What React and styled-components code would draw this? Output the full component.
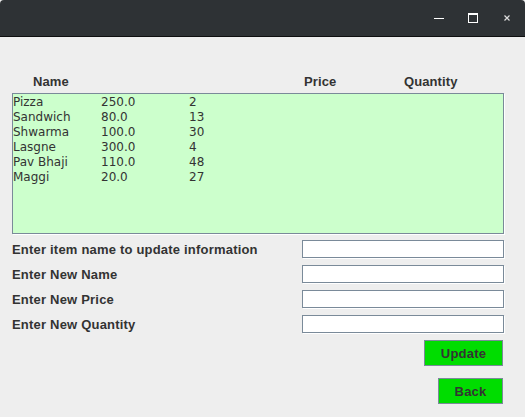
import React from "react";
import styled, { createGlobalStyle } from "styled-components";

const GlobalStyle = createGlobalStyle`
  html, body {
    margin: 0;
    padding: 0;
    background: #eeeeee;
  }
`;

const Window = styled.div`
  width: 525px;
  height: 417px;
  display: flex;
  flex-direction: column;
  background: #eeeeee;
  overflow: hidden;
`;

const TitleBar = styled.div`
  height: 36px;
  background: #2e3235;
  border-bottom: 1px solid #0e0f10;
  border-radius: 4px 4px 0 0;
  display: flex;
  align-items: center;
  justify-content: flex-end;
  padding-right: 1px;
`;

const WinButton = styled.div`
  width: 34px;
  height: 36px;
  display: flex;
  align-items: center;
  justify-content: center;
`;

const Content = styled.div`
  padding: 36px 21px 0 12px;
  display: flex;
  flex-direction: column;
`;

const HeaderRow = styled.div`
  display: grid;
  grid-template-columns: 271px 100px 1fr;
  height: 17px;
  align-items: center;
  padding-left: 21px;
  font-family: "Liberation Sans", Arial, sans-serif;
  font-weight: bold;
  font-size: 13px;
  color: #333333;
  letter-spacing: 0.1px;
`;

const TableBox = styled.div`
  margin-top: 3px;
  height: 138px;
  background: #ccffcc;
  border: 1px solid #7a8a99;
  box-shadow: 1px 1px 0 #ffffff;
  padding-top: 1px;
`;

const DataRow = styled.div`
  display: grid;
  grid-template-columns: 88px 88px 1fr;
  height: 15px;
  line-height: 15px;
  font-family: "DejaVu Sans", sans-serif;
  font-size: 12px;
  color: #333333;
`;

const Form = styled.div`
  margin-top: 6px;
  display: flex;
  flex-direction: column;
  gap: 7px;
`;

const FormRow = styled.div`
  display: flex;
  align-items: center;
  justify-content: space-between;
  height: 18px;
`;

const Label = styled.span`
  font-family: "Liberation Sans", Arial, sans-serif;
  font-weight: bold;
  font-size: 13px;
  letter-spacing: 0.2px;
  color: #333333;
`;

const Field = styled.input`
  box-sizing: border-box;
  width: 202px;
  height: 18px;
  margin: 0;
  padding: 0 4px;
  background: #ffffff;
  border: 1px solid #7a8a99;
  box-shadow: 1px 1px 0 #ffffff;
  outline: none;
`;

const ButtonRow = styled.div`
  display: flex;
  justify-content: flex-end;
  padding-right: 1px;
  margin-top: ${(p) => p.$top}px;
`;

const GreenButton = styled.button`
  box-sizing: border-box;
  width: ${(p) => p.$w}px;
  height: 26px;
  margin: 0;
  padding: 0;
  background: #00dd00;
  border: 1px solid #7a8a99;
  font-family: "Liberation Sans", Arial, sans-serif;
  font-weight: bold;
  font-size: 13px;
  letter-spacing: 0.2px;
  color: #333333;
  cursor: pointer;
`;

const items = [
  ["Pizza", "250.0", "2"],
  ["Sandwich", "80.0", "13"],
  ["Shwarma", "100.0", "30"],
  ["Lasgne", "300.0", "4"],
  ["Pav Bhaji", "110.0", "48"],
  ["Maggi", "20.0", "27"],
];

const labels = [
  "Enter item name to update information",
  "Enter New Name",
  "Enter New Price",
  "Enter New Quantity",
];

export default function App() {
  return (
    <Window>
      <GlobalStyle />
      <TitleBar>
        <WinButton>
          <svg width="12" height="12" viewBox="0 0 12 12">
            <rect x="1" y="6" width="10" height="1" fill="#ffffff" />
          </svg>
        </WinButton>
        <WinButton>
          <svg width="12" height="12" viewBox="0 0 12 12">
            <rect x="1.5" y="1.5" width="9" height="9" fill="none" stroke="#ffffff" strokeWidth="1" />
            <rect x="1" y="1" width="10" height="2" fill="#ffffff" />
          </svg>
        </WinButton>
        <WinButton>
          <svg width="12" height="12" viewBox="0 0 12 12">
            <path d="M3.5 3.5 L8.5 8.5 M8.5 3.5 L3.5 8.5" stroke="#dddddd" strokeWidth="1.2" />
          </svg>
        </WinButton>
      </TitleBar>
      <Content>
        <HeaderRow>
          <span>Name</span>
          <span>Price</span>
          <span>Quantity</span>
        </HeaderRow>
        <TableBox>
          {items.map((it) => (
            <DataRow key={it[0]}>
              <span>{it[0]}</span>
              <span>{it[1]}</span>
              <span>{it[2]}</span>
            </DataRow>
          ))}
        </TableBox>
        <Form>
          {labels.map((l) => (
            <FormRow key={l}>
              <Label>{l}</Label>
              <Field type="text" />
            </FormRow>
          ))}
        </Form>
        <ButtonRow $top={7}>
          <GreenButton $w={79}>Update</GreenButton>
        </ButtonRow>
        <ButtonRow $top={12}>
          <GreenButton $w={65}>Back</GreenButton>
        </ButtonRow>
      </Content>
    </Window>
  );
}
